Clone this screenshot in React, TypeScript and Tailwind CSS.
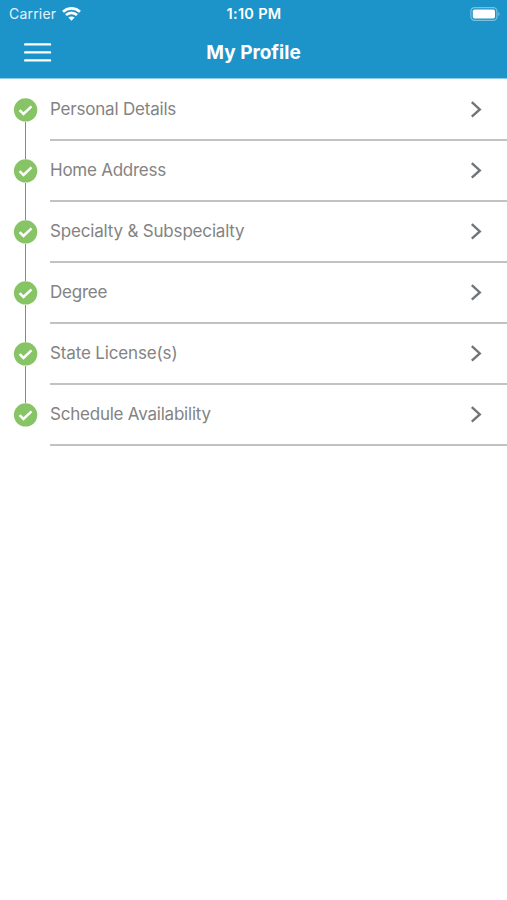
const steps = [
  { label: 'Personal Details', tracking: 'tracking-[-0.2px]' },
  { label: 'Home Address', tracking: 'tracking-[-0.25px]' },
  { label: 'Specialty & Subspecialty', tracking: 'tracking-[-0.18px]' },
  { label: 'Degree', tracking: 'tracking-[-0.22px]' },
  { label: 'State License(s)', tracking: 'tracking-[-0.15px]' },
  { label: 'Schedule Availability', tracking: 'tracking-[-0.22px]' },
];

function WifiIcon() {
  return (
    <svg className="ml-[6px] h-[14px] w-[19px]" viewBox="0 0 19 14" fill="none" stroke="white" strokeWidth="2.7">
      <path d="M1 4.7C5.9 0.2 13.1 0.2 18 4.7" />
      <path d="M4 8.1C7.2 5.1 11.8 5.1 15 8.1" />
      <path d="M9.5 13.8 6.4 10.6C8.2 9 10.8 9 12.6 10.6Z" fill="white" stroke="none" />
    </svg>
  );
}

function MenuIcon() {
  return (
    <svg className="h-[20px] w-[28px]" viewBox="0 0 28 20" stroke="white" strokeWidth="2.4" strokeLinecap="round">
      <path d="M1.2 1.4H26M1.2 9.4H26M1.2 17.4H26" />
    </svg>
  );
}

function BatteryIcon() {
  return (
    <svg className="-mr-px h-[14px] w-[31px]" viewBox="0 0 31 14" fill="none">
      <rect x="0.9" y="0.7" width="26" height="12.6" rx="3.6" stroke="#79bfe1" strokeWidth="1.2" />
      <rect x="2.8" y="2.5" width="22.2" height="9" rx="1.8" fill="white" />
      <path d="M28.4 4.8C30 5.5 30 8.5 28.4 9.2Z" fill="#79bfe1" />
    </svg>
  );
}

function CheckBadge() {
  return (
    <svg className="h-[24px] w-[25px] shrink-0" viewBox="0 0 25 24" fill="none">
      <circle cx="12.6" cy="11.9" r="11.7" fill="#87c466" />
      <path d="m6.6 12.1 3.9 3.9 8-7.6" stroke="white" strokeWidth="2.5" />
    </svg>
  );
}

function StepRow({ label, tracking, first, last }: { label: string; tracking: string; first: boolean; last: boolean }) {
  return (
    <li className="flex h-[61px]">
      <div className="flex w-[50px] shrink-0 flex-col items-center pl-px">
        <div className={first ? 'h-[18px] w-px' : 'h-[18px] w-px bg-[#85888d]'} />
        <CheckBadge />
        <div className={last ? 'w-px flex-1' : 'w-px flex-1 bg-[#85888d]'} />
      </div>
      <div className="flex flex-1 items-center justify-between border-b-2 border-[#c2c2c4] pr-[25px] pb-px">
        <span className={`text-[17px] leading-6 whitespace-nowrap text-[#838383] ${tracking}`}>{label}</span>
        <svg className="h-[18px] w-[12px]" viewBox="0 0 12 18" fill="none" stroke="#70757a" strokeWidth="2.4">
          <path d="m1.8 2.2 8 7.2-8 7.2" />
        </svg>
      </div>
    </li>
  );
}

export default function App() {
  return (
    <main className="min-h-[900px] w-full overflow-hidden bg-white font-['Inter','Liberation_Sans',sans-serif]">
      <header className="h-[79px] border-b border-[#8ccbe7] bg-[#1c94c9] text-white">
        <div className="grid h-[27px] grid-cols-[1fr_60px_1fr] items-center pr-[7px] pl-[8px] text-[14px]">
          <div className="flex items-center pl-px text-[#e2f3fb]">
            <span className="tracking-[0.2px]">Carrier</span>
            <WifiIcon />
          </div>
          <span className="text-center text-[14.5px] font-semibold tracking-[0.3px] whitespace-nowrap">1:10 PM</span>
          <div className="flex justify-end">
            <BatteryIcon />
          </div>
        </div>
        <div className="grid h-[51px] grid-cols-[64px_1fr_64px] items-center">
          <div className="flex pl-[24px]">
            <MenuIcon />
          </div>
          <h1 className="pt-px text-center text-[19px] leading-7 font-bold">My Profile</h1>
        </div>
      </header>
      <ul className="pt-px">
        {steps.map((step, i) => (
          <StepRow key={step.label} {...step} first={i === 0} last={i === steps.length - 1} />
        ))}
      </ul>
    </main>
  );
}
